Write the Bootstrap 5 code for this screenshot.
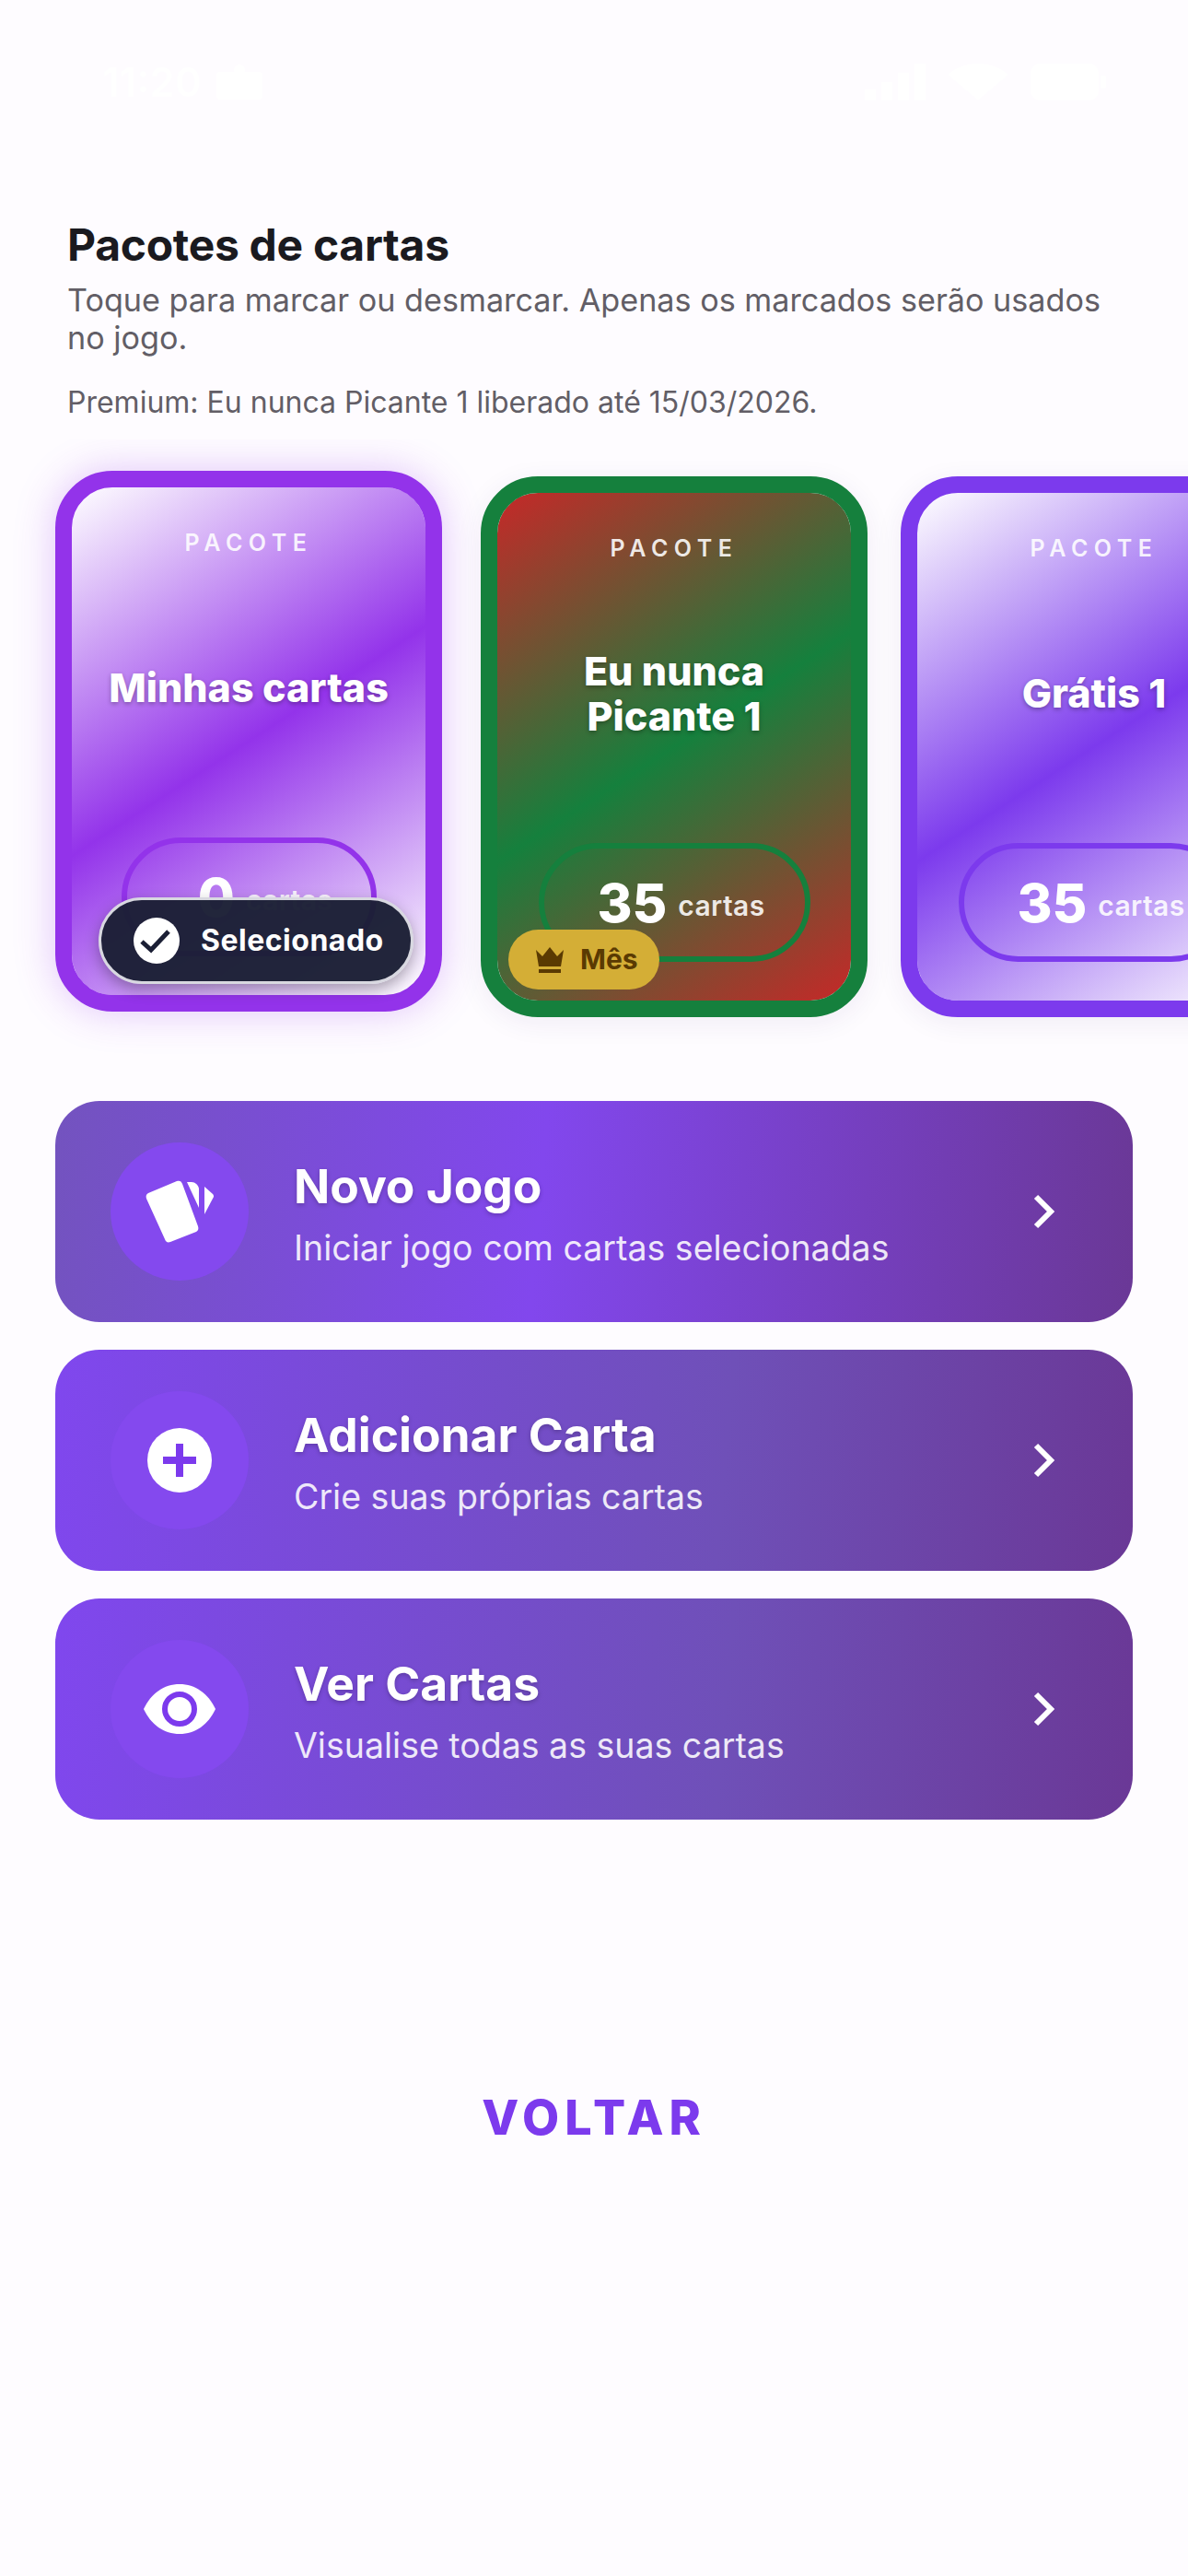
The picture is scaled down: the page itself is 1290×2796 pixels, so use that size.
<!DOCTYPE html>
<html lang="pt-BR">
<head>
  <meta charset="UTF-8" />
  <meta name="viewport" content="width=device-width, initial-scale=1.0" />
  <title>Pacotes de cartas</title>
  <link href="https://cdn.jsdelivr.net/npm/bootstrap@5.3.3/dist/css/bootstrap.min.css" rel="stylesheet">
  <style>
    body {
      font-family: Inter, "Liberation Sans", sans-serif;
      background: #fefcff;
      color: #1a1a1f;
      width: 1290px;
      height: 2796px;
      overflow: hidden;
    }
    .status-row {
      height: 120px;
      padding: 57px 89px 0 111px;
      color: #fff;
      font-size: 44px;
      font-weight: 600;
      line-height: 50px;
    }
    .intro {
      padding: 0 73px;
      margin-top: 118px;
    }
    .intro-title {
      font-size: 48px;
      font-weight: 700;
      line-height: 56px;
      margin-bottom: 11px;
      letter-spacing: -.3px;
    }
    .intro-sub {
      font-size: 34.2px;
      line-height: 41px;
      color: #625e66;
      margin-bottom: 30px;
    }
    .intro-note {
      font-size: 32px;
      line-height: 40px;
      color: #625e66;
      margin-bottom: 0;
    }
    .pack-strip {
      padding: 40px 0 40px 66px;
      gap: 36px;
      margin-top: 20px;
    }
    .pack {
      flex: 0 0 420px;
      height: 587px;
      border: 18px solid var(--pk);
      border-radius: 62px;
      background: linear-gradient(147deg, var(--pk-end) 0%, var(--pk) 50%, var(--pk-end) 100%) padding-box;
      box-shadow: 0 6px 30px rgba(60, 30, 120, .07);
      color: #fff;
    }
    .pack-sel {
      transform: translate(-6px, -6px);
      box-shadow: 0 0 44px rgba(147, 51, 234, .28);
    }
    .pack-purple { --pk: #9333ea; --pk-end: #fff; }
    .pack-green { --pk: #15803d; --pk-end: #c62828; }
    .pack-violet { --pk: #7c3aed; --pk-end: #fff; }
    .pack-label {
      font-size: 25px;
      font-weight: 600;
      letter-spacing: 6.5px;
      line-height: 30px;
      margin-top: 45px;
      color: rgba(255, 255, 255, .88);
    }
    .pack-name {
      height: 305px;
      font-size: 43px;
      font-weight: 800;
      line-height: 49px;
      padding-bottom: 20px;
      text-shadow: 0 2px 5px rgba(0, 0, 0, .3);
    }
    .pack-count {
      height: 129px;
      width: 295px;
      border: 6px solid var(--pk);
      padding-left: 15px;
      gap: 12px;
      flex: none;
    }
    .pack-sel .pack-count {
      width: 277px;
      padding-left: 36px;
    }
    .count-num {
      font-size: 58px;
      font-weight: 800;
      line-height: 1;
    }
    .count-word {
      font-size: 30px;
      font-weight: 600;
      padding-top: 8px;
      letter-spacing: .4px;
      color: rgba(255, 255, 255, .88);
    }
    .sel-tag {
      left: 29px;
      bottom: 12px;
      width: 342px;
      height: 94px;
      background: rgba(27, 31, 53, .97);
      border: 3px solid #d8d8e0;
      box-shadow: 0 6px 16px rgba(0, 0, 0, .3);
      padding-left: 35px;
      gap: 23px;
      font-size: 32px;
      font-weight: 700;
      letter-spacing: .5px;
    }
    .month-tag {
      left: 12px;
      bottom: 12px;
      width: 164px;
      height: 65px;
      background: #d4ae36;
      color: #5a3a02;
      gap: 17px;
      padding-left: 29px;
      font-size: 30px;
      font-weight: 700;
    }
    .menu-stack {
      padding: 0 60px;
      gap: 30px;
      margin-top: 51px;
    }
    .menu-btn {
      height: 240px;
      border-radius: 48px;
      padding: 0 84px 0 60px;
      gap: 49px;
      color: #fff;
    }
    .menu-a { background: linear-gradient(95deg, #7353bf 0%, #8247ed 45%, #6a3896 100%); }
    .menu-b { background: linear-gradient(95deg, #8047ee 0%, #6f50b8 62%, #6a3896 100%); }
    .icon-disc {
      width: 150px;
      height: 150px;
      flex: none;
      background: #8449ee;
    }
    .menu-title {
      font-size: 51.5px;
      font-weight: 700;
      line-height: 62px;
      padding-top: 4px;
      text-shadow: 0 2px 5px rgba(0, 0, 0, .22);
    }
    .menu-sub {
      font-size: 37.5px;
      line-height: 46px;
      margin-top: 14px;
      color: rgba(255, 255, 255, .88);
    }
    .back-link {
      margin-top: 292px;
      font-size: 52px;
      font-weight: 800;
      letter-spacing: 6px;
      line-height: 64px;
      color: #7c3aed;
    }
  </style>
</head>
<body>

<div class="status-row d-flex justify-content-between">
  <div class="d-flex align-items-center gap-3">
    <span>11:20</span>
    <svg width="50" height="38" viewBox="0 0 50 38" fill="#fff"><rect y="8" width="50" height="30" rx="4"/><circle cx="25" cy="6" r="6"/></svg>
  </div>
  <div class="d-flex align-items-center gap-4">
    <svg width="66" height="40" viewBox="0 0 66 40" fill="#fff"><rect y="28" width="12" height="12"/><rect x="18" y="20" width="12" height="20"/><rect x="36" y="10" width="12" height="30"/><rect x="54" width="12" height="40"/></svg>
    <svg width="66" height="40" viewBox="0 0 66 40" fill="#fff"><path d="M33 40 0 12C18-4 48-4 66 12Z"/></svg>
    <svg width="82" height="40" viewBox="0 0 82 40" fill="#fff"><rect width="74" height="40" rx="10"/><rect x="76" y="13" width="6" height="14" rx="2"/></svg>
  </div>
</div>

<div class="intro">
  <h1 class="intro-title">Pacotes de cartas</h1>
  <p class="intro-sub">Toque para marcar ou desmarcar. Apenas os marcados serão usados no jogo.</p>
  <p class="intro-note">Premium: Eu nunca Picante 1 liberado até 15/03/2026.</p>
</div>

<div class="pack-strip d-flex overflow-hidden">

  <div class="pack pack-purple pack-sel position-relative d-flex flex-column align-items-center text-center">
    <div class="pack-label">PACOTE</div>
    <div class="pack-name d-flex align-items-center justify-content-center">Minhas cartas</div>
    <div class="pack-count rounded-pill d-flex align-items-center justify-content-center">
      <span class="count-num">0</span><span class="count-word">cartas</span>
    </div>
    <div class="sel-tag position-absolute rounded-pill d-flex align-items-center text-white">
      <svg width="50" height="50" viewBox="0 0 50 50"><circle cx="25" cy="25" r="25" fill="#fff"/><path d="M9 26l10 9L38 15" fill="none" stroke="#1b1f35" stroke-width="5"/></svg>
      <span>Selecionado</span>
    </div>
  </div>

  <div class="pack pack-green position-relative d-flex flex-column align-items-center text-center">
    <div class="pack-label">PACOTE</div>
    <div class="pack-name d-flex align-items-center justify-content-center">Eu nunca<br>Picante 1</div>
    <div class="pack-count rounded-pill d-flex align-items-center justify-content-center">
      <span class="count-num">35</span><span class="count-word">cartas</span>
    </div>
    <div class="month-tag position-absolute rounded-pill d-flex align-items-center">
      <svg width="32" height="28" viewBox="0 0 32 28" fill="#5a3a02"><path d="M1 3l7 7 8-10 8 10 7-7-3 18H4z"/><rect x="4" y="24" width="24" height="4"/></svg>
      <span>Mês</span>
    </div>
  </div>

  <div class="pack pack-violet position-relative d-flex flex-column align-items-center text-center">
    <div class="pack-label">PACOTE</div>
    <div class="pack-name d-flex align-items-center justify-content-center">Grátis 1</div>
    <div class="pack-count rounded-pill d-flex align-items-center justify-content-center">
      <span class="count-num">35</span><span class="count-word">cartas</span>
    </div>
  </div>

</div>

<div class="menu-stack d-flex flex-column">

  <div class="menu-btn menu-a d-flex align-items-center">
    <div class="icon-disc rounded-circle d-flex align-items-center justify-content-center">
      <svg width="74" height="68" viewBox="0 0 74 68" fill="#fff">
        <path d="M3 14 34 1c3-1 5 0 6 3l17 46c1 3 0 5-2 6L27 67c-3 1-5 0-6-3L1 20c-1-3 0-5 2-6Z"/>
        <path d="M45 2h5c4 0 7 3 8 7v21Z"/>
        <path d="M64 7l9 8c1 1 1 2 1 3L64 37Z"/>
      </svg>
    </div>
    <div class="flex-grow-1">
      <div class="menu-title">Novo Jogo</div>
      <div class="menu-sub">Iniciar jogo com cartas selecionadas</div>
    </div>
    <svg width="24" height="38" viewBox="0 0 24 38"><path d="M3 3l16 16L3 35" fill="none" stroke="#fff" stroke-width="6"/></svg>
  </div>

  <div class="menu-btn menu-b d-flex align-items-center">
    <div class="icon-disc rounded-circle d-flex align-items-center justify-content-center">
      <svg width="70" height="70" viewBox="0 0 70 70"><circle cx="35" cy="35" r="35" fill="#fff"/><path d="M35 17v36M17 35h36" stroke="#7c3aed" stroke-width="8"/></svg>
    </div>
    <div class="flex-grow-1">
      <div class="menu-title">Adicionar Carta</div>
      <div class="menu-sub">Crie suas próprias cartas</div>
    </div>
    <svg width="24" height="38" viewBox="0 0 24 38"><path d="M3 3l16 16L3 35" fill="none" stroke="#fff" stroke-width="6"/></svg>
  </div>

  <div class="menu-btn menu-b d-flex align-items-center">
    <div class="icon-disc rounded-circle d-flex align-items-center justify-content-center">
      <svg width="78" height="54" viewBox="0 0 78 54">
        <path d="M0 27C8 10 22 0 39 0s31 10 39 27C70 44 56 54 39 54S8 44 0 27Z" fill="#fff"/>
        <circle cx="39" cy="27" r="16" fill="none" stroke="#7c3aed" stroke-width="6"/>
      </svg>
    </div>
    <div class="flex-grow-1">
      <div class="menu-title">Ver Cartas</div>
      <div class="menu-sub">Visualise todas as suas cartas</div>
    </div>
    <svg width="24" height="38" viewBox="0 0 24 38"><path d="M3 3l16 16L3 35" fill="none" stroke="#fff" stroke-width="6"/></svg>
  </div>

</div>

<div class="back-link text-center">VOLTAR</div>

<script src="https://cdn.jsdelivr.net/npm/bootstrap@5.3.3/dist/js/bootstrap.bundle.min.js"></script>
</body>
</html>
